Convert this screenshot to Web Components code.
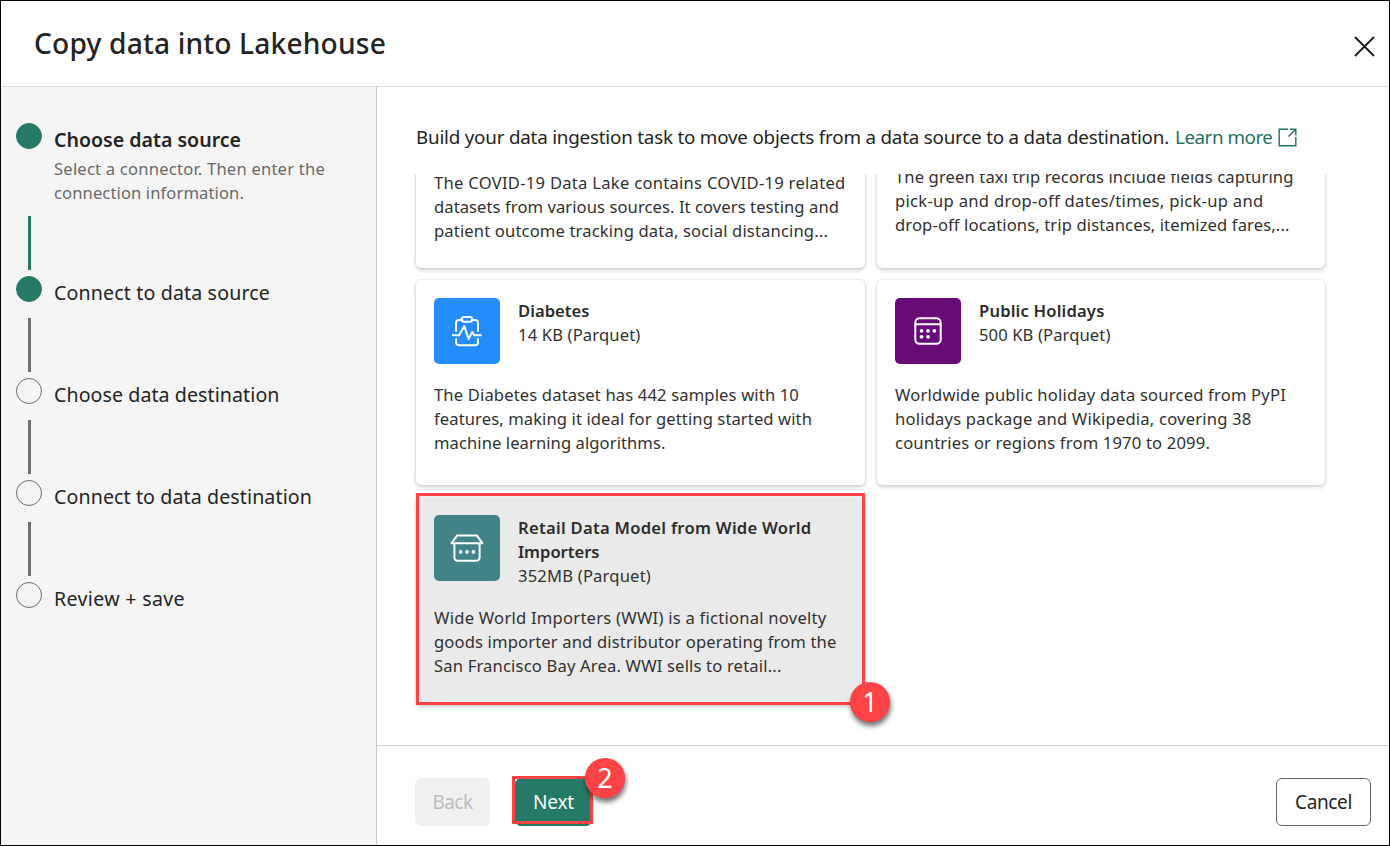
<!DOCTYPE html>
<html lang="en">
<head>
<meta charset="utf-8">
<title>Copy data into Lakehouse</title>
<style>
html,body{margin:0;height:100%;overflow:hidden;background:#fff}
body{font-family:"Noto Sans","Open Sans",sans-serif;color:#242424}
</style>
</head>
<body>
<copy-wizard></copy-wizard>
<script>
const define = (name, html, setup) => customElements.define(name, class extends HTMLElement {
  connectedCallback() {
    if (this.shadowRoot) return;
    const t = document.createElement('template');
    t.innerHTML = html;
    this.attachShadow({mode: 'open'}).append(t.content.cloneNode(true));
    if (setup) setup(this, this.shadowRoot);
  }
});

/* One line of text, tracked so that it fills the width in its w attribute. */
define('text-line', `<style>
:host{display:block;white-space:nowrap}
span{display:inline-block;vertical-align:top}
</style><span><slot></slot></span>`, (host, root) => {
  const s = root.querySelector('span');
  const n = host.textContent.length;
  s.style.letterSpacing = ((+host.getAttribute('w') - s.getBoundingClientRect().width) / n) + 'px';
});

define('wizard-step', `<style>
:host{display:grid;grid-template-columns:26px 1fr;column-gap:12px;height:102px;font-size:19.6px;line-height:26px}
:host([tall]){height:153px}
.rail{display:flex;flex-direction:column;justify-content:space-between;align-items:center}
.dot{width:26px;height:26px;box-sizing:border-box;border:1px solid #6e6e6e;border-radius:50%}
:host([done]) .dot{background:#257a66;border-color:#257a66}
.bar{width:3px;height:54px;margin:0 0 6px 1px;background:#707070}
:host([tall]) .bar{background:#257a66}
:host([last]) .bar{display:none}
.text{padding-top:4px}
:host([tall]) .text{font-weight:560}
::slotted([slot=note]){font-size:16.6px;line-height:24px;font-weight:400;color:#6a6a6a}
.note{padding-top:4px}
</style><div class="rail"><div class="dot"></div><div class="bar"></div></div>
<div class="text"><slot></slot><div class="note"><slot name="note"></slot></div></div>`);

define('tile-icon', `<style>
:host{display:flex;flex:none;width:66px;height:66px;border-radius:5px;align-items:center;justify-content:center}
:host([kind=health]){background:#258dfb}
:host([kind=calendar]){background:#680a77}
:host([kind=shop]){background:#428387}
svg{width:66px;height:66px;fill:none;stroke:#fff;stroke-width:2;stroke-linecap:round;stroke-linejoin:round}
.d{fill:#fff;stroke:none}
</style><svg viewBox="0 0 66 66"></svg>`, (host, root) => {
  root.querySelector('svg').innerHTML = {
    health: '<rect x="27.8" y="19" width="10.4" height="4.8" rx="2.3"/><path d="M27.5 22H25a3 3 0 0 0-3 3v8M38.500 22H41a3 3 0 0 1 3 3v8M22 41v3.500a2.700 2.700 0 0 0 2.700 2.700h16.600a2.700 2.700 0 0 0 2.700-2.700V41M19 37.200h6L30.300 28l4.200 13 3.700-7 2 3.200H47"/>',
    calendar: '<rect x="20.300" y="20.300" width="25.400" height="25.400" rx="4.300"/><path d="M20.500 26.300h25"/><g class="d"><circle cx="26.600" cy="32.800" r="1.900"/><circle cx="33" cy="32.800" r="1.900"/><circle cx="39.400" cy="32.800" r="1.900"/><circle cx="26.600" cy="38.800" r="1.900"/><circle cx="33" cy="38.800" r="1.900"/></g>',
    shop: '<path d="M23.300 20.400h19.400l5.700 7.800H17.600zM20.400 28.500v14a3.300 3.300 0 0 0 3.300 3.300h18.600a3.300 3.300 0 0 0 3.300-3.300v-14"/><g class="d"><circle cx="26.600" cy="36.900" r="1.900"/><circle cx="33" cy="36.900" r="1.900"/><circle cx="39.400" cy="36.900" r="1.900"/></g>'
  }[host.getAttribute('kind')];
});

define('data-card', `<style>
:host{display:block;position:relative;box-sizing:border-box;padding:18px;border-radius:5px;background:#fff;
 box-shadow:0 0 2px rgba(0,0,0,.16),0 2px 4px rgba(0,0,0,.18);font-size:16.6px;line-height:24px;color:#323130}
:host([selected]){background:#eaeaea}
.head{display:flex;gap:18px;min-height:67px;margin-bottom:18px}
:host([tail]) .head{display:none}
.title{padding-top:1px}
::slotted([slot=title]){font-weight:600;color:#2b2b2b}
</style><div class="head"><slot name="icon"></slot><div class="title"><slot name="title"></slot><slot name="size"></slot></div></div><slot></slot><slot name="mark"></slot>`);

define('call-out', `<style>
:host{position:absolute;box-sizing:border-box;border:3px solid #fd4345;z-index:2;font-weight:400}
b{position:absolute;width:40px;height:40px;border-radius:50%;background:#fd4345;color:#fff;
 font:400 27px/40px "Noto Sans",sans-serif;text-align:center;box-shadow:1px 4px 5px rgba(0,0,0,.55)}
:host([at=bottom]) b{right:-28px;bottom:-20px}
:host([at=top]) b{right:-35px;top:-21px}
</style><b><slot></slot></b>`);

define('push-button', `<style>
:host{display:flex;position:relative;box-sizing:border-box;height:48px;border:1px solid #666;border-radius:6px;align-items:center;justify-content:center;font-size:19px;line-height:26px;background:#fff}
:host([off]){background:#f0f0f0;border-color:#f0f0f0;color:#bdbdbd}
:host([primary]){background:#257a66;border-color:#257a66;color:#fff}
</style><slot></slot>`);

define('copy-wizard', `<style>
:host{display:grid;grid-template:86px 1fr/376px 1fr;box-sizing:border-box;width:1390px;height:846px;border:1px solid #000;background:#fff}
header{grid-column:1/3;display:flex;justify-content:space-between;align-items:flex-start;box-sizing:border-box;border-bottom:1px solid #dcdcdc;padding:22px 14px 0 33px}
h1{margin:0;font-size:28.2px;font-weight:540;line-height:40px}
header svg{margin-top:13px;width:21px;height:21px;stroke:#1d1d1d;stroke-width:2;fill:none}
nav{box-sizing:border-box;background:#f5f5f5;border-right:1px solid #c8c8c8;padding:36px 0 0 15px}
main{display:flex;flex-direction:column;min-width:0;min-height:0}
.intro{height:87px;padding:37px 0 0 39px;display:flex;box-sizing:border-box;font-size:18.8px;line-height:26px;flex:none}
.intro text-line+text-line{margin-left:6px;color:#257165}
.intro svg{width:19px;height:19px;margin:4px 0 0 5.5px;fill:none;stroke:#257165;stroke-width:1.5}
.scroll{flex:1;min-height:0;overflow:hidden;padding-left:39px}
.grid{display:grid;grid-template-columns:449px 448px;grid-template-rows:106px 205px 208px;column-gap:12px;row-gap:12px;margin-top:-12px}
.covid{padding-top:9px}.taxi{padding-top:3px}
.m1{left:0;top:-4px;width:449px;height:212px}
.m2{left:-4px;top:-3px;width:81px;height:48px}
footer{flex:none;height:100px;box-sizing:border-box;border-top:1px solid #d0d0d0;padding:32px 18px 0 38px;display:flex}
.back{width:75px}.next{width:77px;margin-left:25px}.cancel{width:95px;margin-left:auto}
</style>
<header><h1><text-line w="352">Copy data into Lakehouse</text-line></h1>
<svg viewBox="0 0 22 22"><path d="M1 1l20 20M21 1L1 21"/></svg></header>
<nav>
<wizard-step tall done><text-line w="187">Choose data source</text-line><text-line slot="note" w="271">Select a connector. Then enter the</text-line><text-line slot="note" w="190">connection information.</text-line></wizard-step>
<wizard-step done><text-line w="216">Connect to data source</text-line></wizard-step>
<wizard-step><text-line w="225.5">Choose data destination</text-line></wizard-step>
<wizard-step><text-line w="258">Connect to data destination</text-line></wizard-step>
<wizard-step last><text-line w="131">Review + save</text-line></wizard-step>
</nav>
<main>
<div class="intro"><text-line w="753">Build your data ingestion task to move objects from a data source to a data destination.</text-line><text-line w="97.5">Learn more</text-line>
<svg viewBox="0 0 20 20"><path d="M10.500 1.250H1.250v17.500h17.500V9.500M12.500 1.250h6.250V7.500M18.500 1.500L11 9"/></svg></div>
<div class="scroll"><div class="grid">
<data-card tail class="covid"><text-line w="411.5">The COVID-19 Data Lake contains COVID-19 related</text-line><text-line w="405">datasets from various sources. It covers testing and</text-line><text-line w="394">patient outcome tracking data, social distancing...</text-line></data-card>
<data-card tail class="taxi"><text-line w="398.5">The green taxi trip records include fields capturing</text-line><text-line w="368.5">pick-up and drop-off dates/times, pick-up and</text-line><text-line w="394.5">drop-off locations, trip distances, itemized fares,...</text-line></data-card>
<data-card><tile-icon slot="icon" kind="health"></tile-icon><text-line slot="title" w="71.5">Diabetes</text-line><text-line slot="size" w="122.5">14 KB (Parquet)</text-line><text-line w="365">The Diabetes dataset has 442 samples with 10</text-line><text-line w="378">features, making it ideal for getting started with</text-line><text-line w="231.5">machine learning algorithms.</text-line></data-card>
<data-card><tile-icon slot="icon" kind="calendar"></tile-icon><text-line slot="title" w="125.5">Public Holidays</text-line><text-line slot="size" w="131.5">500 KB (Parquet)</text-line><text-line w="391">Worldwide public holiday data sourced from PyPI</text-line><text-line w="356.5">holidays package and Wikipedia, covering 38</text-line><text-line w="315">countries or regions from 1970 to 2099.</text-line></data-card>
<data-card selected><tile-icon slot="icon" kind="shop"></tile-icon><text-line slot="title" w="293.5">Retail Data Model from Wide World</text-line><text-line slot="title" w="81.5">Importers</text-line><text-line slot="size" w="133">352MB (Parquet)</text-line><text-line w="392.5">Wide World Importers (WWI) is a fictional novelty</text-line><text-line w="402.5">goods importer and distributor operating from the</text-line><text-line w="347.500">San Francisco Bay Area. WWI sells to retail...</text-line><call-out class="m1" slot="mark" at="bottom">1</call-out></data-card>
</div></div>
<footer><push-button class="back" off><text-line w="40">Back</text-line></push-button><push-button class="next" primary><text-line w="41">Next</text-line><call-out class="m2" at="top">2</call-out></push-button><push-button class="cancel"><text-line w="57">Cancel</text-line></push-button></footer>
</main>`);
</script>
</body>
</html>
